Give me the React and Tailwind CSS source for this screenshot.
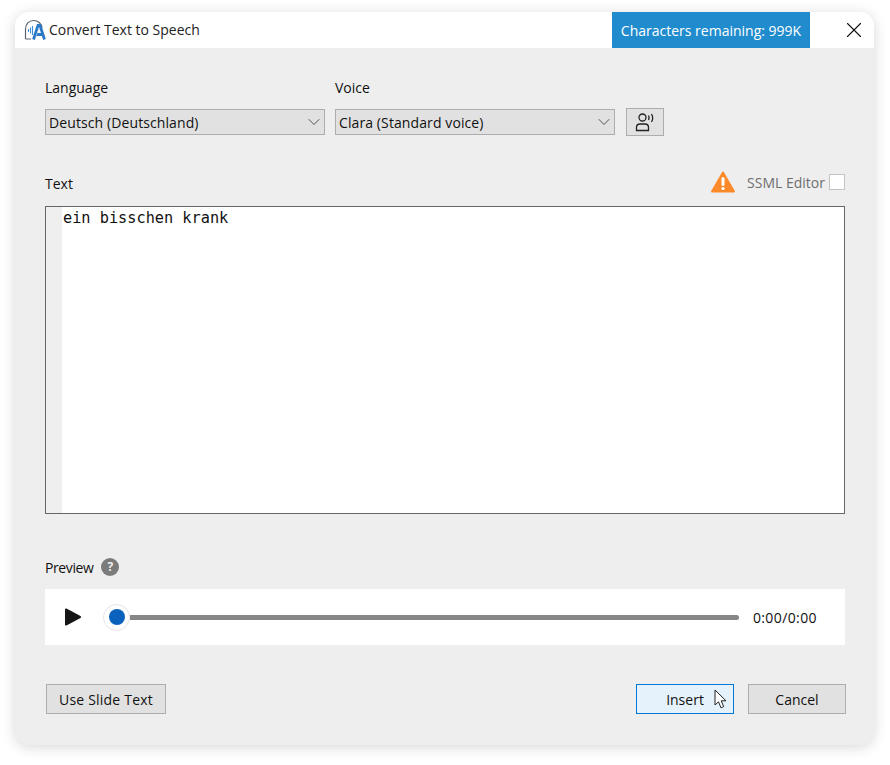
import { ChevronDown, X } from 'lucide-react';

const sans = 'font-["Open_Sans","Noto_Sans",sans-serif]';

function AppLogo() {
  return (
    <svg width="22" height="22" viewBox="0 0 22 22" fill="none">
      <path d="M1.500 20V10C1.500 5 5 1.500 9.500 1.500C14 1.500 17.500 4.500 18 9" stroke="#5b6670" strokeWidth="1.200" />
      <path d="M1.500 20H7" stroke="#5b6670" strokeWidth="1.200" />
      <path d="M4.500 10V13M6.500 8.500V14.500M8.500 7V16" stroke="#3f8fd6" strokeWidth="1.100" />
      <path d="M9.500 20.500L14 6.500H16L20.500 20.500M11.500 15.500H18.500" stroke="#2b78c5" strokeWidth="2.800" />
      <path d="M15 8.500L12 18" stroke="#a9cdee" strokeWidth="0.800" />
    </svg>
  );
}

function VoiceIcon() {
  return (
    <svg width="20" height="20" viewBox="0 0 20 20" fill="none" stroke="#222" strokeWidth="1.300">
      <circle cx="7.500" cy="5.500" r="3.500" />
      <path d="M1.500 18.500V15.500C1.500 13.300 3 12 5 12H10C12 12 13.500 13.300 13.500 15.500V18.500H1.500Z" />
      <path d="M13.500 3.500C14.200 4.800 14.200 6.700 13.500 8M16.500 2C17.800 4.300 17.800 8 16.500 10" />
    </svg>
  );
}

function Select({ value, width }) {
  return (
    <div className={`flex h-[26px] ${width} items-center justify-between border border-[#adadad] bg-[#e1e1e1] pl-[3px] text-[14px] tracking-[0.1px] text-[#111]`}>
      <span>{value}</span>
      <ChevronDown size={20} strokeWidth={1} className="text-[#333]" />
    </div>
  );
}

function Button({ children, className = '' }) {
  return (
    <button className={`flex h-[30px] items-center justify-center border border-[#adadad] bg-[#e1e1e1] text-[14px] text-[#111] ${className}`}>
      {children}
    </button>
  );
}

export default function App() {
  return (
    <div className={`h-[765px] w-[890px] bg-white pl-[15px] pt-[12px] ${sans}`}>
      <div className="flex h-[733px] w-[859px] flex-col overflow-hidden rounded-[14px] bg-[#eeeeee] shadow-[0_2px_14px_rgba(0,0,0,0.16)]">
        {/* Title bar */}
        <div className="flex h-[36px] shrink-0 items-center bg-white">
          <div className="ml-[9px] mr-[3px]">
            <AppLogo />
          </div>
          <span className="mb-[2px] text-[14px] text-[#222]">Convert Text to Speech</span>
          <div className="ml-auto flex h-full w-[198px] items-center justify-center bg-[#218ccd] text-[14px] text-white">
            Characters remaining: 999K
          </div>
          <div className="flex w-[64px] justify-end pr-[7px]">
            <X size={26} strokeWidth={1} className="text-[#111]" />
          </div>
        </div>

        <div className="flex flex-1 flex-col pl-[30px] pr-[29px]">
          {/* Language and voice */}
          <div className="mt-[30px] flex items-end">
            <div className="mr-[10px]">
              <div className="mb-[12px] h-[19px] text-[14px] leading-[19px] text-[#111]">Language</div>
              <Select value="Deutsch (Deutschland)" width="w-[280px]" />
            </div>
            <div>
              <div className="mb-[12px] h-[19px] text-[14px] leading-[19px] text-[#111]">Voice</div>
              <Select value="Clara (Standard voice)" width="w-[280px]" />
            </div>
            <button className="mb-[-1px] ml-[11px] flex h-[28px] w-[38px] items-center justify-center border border-[#adadad] bg-[#e1e1e1]">
              <VoiceIcon />
            </button>
          </div>

          {/* Text */}
          <div className="mt-[35px] flex h-[36px] items-start justify-between">
            <span className="text-[14px] leading-[28px] text-[#111]">Text</span>
            <div className="flex items-center">
              <svg width="26" height="24" viewBox="0 0 26 24">
                <path d="M13 2.500L24 21.500H2Z" fill="#fd8a2a" stroke="#fd8a2a" strokeWidth="2" strokeLinejoin="round" />
                <path d="M13 8.500V14.500" stroke="#fff" strokeWidth="3" strokeLinecap="round" />
                <circle cx="13" cy="18.500" r="1.600" fill="#fff" />
              </svg>
              <span className="ml-[11px] text-[14px] text-[#6f6f6f]">SSML Editor</span>
              <div className="ml-[4px] h-[16px] w-[16px] border border-[#c4c4c4] bg-white" />
            </div>
          </div>
          <div className="flex h-[308px] w-[800px] border border-[#666666] bg-white">
            <div className="w-[16px] shrink-0 bg-[#efefef]" />
            <div className="pl-[1px] pt-px font-['DejaVu_Sans_Mono',monospace] text-[15.25px] leading-[20px] text-[#111]">ein bisschen krank</div>
          </div>

          {/* Preview */}
          <div className="mt-[42px] flex h-[22px] items-center">
            <span className="text-[14px] tracking-[-0.4px] text-[#111]">Preview</span>
            <div className="ml-[8px] flex h-[18px] w-[18px] items-center justify-center rounded-full bg-[#7b7b7b] text-[12px] font-bold text-[#eee]">?</div>
          </div>
          <div className="mt-[11px] flex h-[56px] w-[800px] items-center bg-white">
            <svg width="18" height="20" viewBox="0 0 18 20" className="ml-[19px]">
              <path d="M2 2.500L16 10L2 17.500Z" fill="#161616" stroke="#161616" strokeWidth="2" strokeLinejoin="round" />
            </svg>
            <div className="ml-[21px] flex flex-1 items-center">
              <div className="z-10 flex h-[27px] w-[27px] shrink-0 items-center justify-center rounded-full border border-[#e4e4e4] bg-white">
                <div className="h-[16px] w-[16px] rounded-full bg-[#0a62bd]" />
              </div>
              <div className="h-[5px] flex-1 rounded-r-full bg-[#868686]" />
            </div>
            <span className="ml-[14px] mr-[28px] text-[14px] tracking-[0.4px] text-[#111]">0:00/0:00</span>
          </div>

          {/* Footer */}
          <div className="mt-[39px] flex">
            <Button className="ml-px w-[120px] tracking-[0.2px]">Use Slide Text</Button>
            <div className="relative ml-auto">
              <Button className="w-[98px] !border-[#0078d7] !bg-[#e5f1fb]">Insert</Button>
              <svg width="14" height="21" viewBox="0 0 14 21" className="absolute left-[78px] top-[5px]">
                <path d="M1 1V16L4.500 12.800L7 18.800L9.700 17.600L7.200 11.800H12Z" fill="#fff" stroke="#222" strokeWidth="1" strokeLinejoin="round" />
              </svg>
            </div>
            <Button className="-mr-px ml-[14px] w-[98px]">Cancel</Button>
          </div>
        </div>
      </div>
    </div>
  );
}
